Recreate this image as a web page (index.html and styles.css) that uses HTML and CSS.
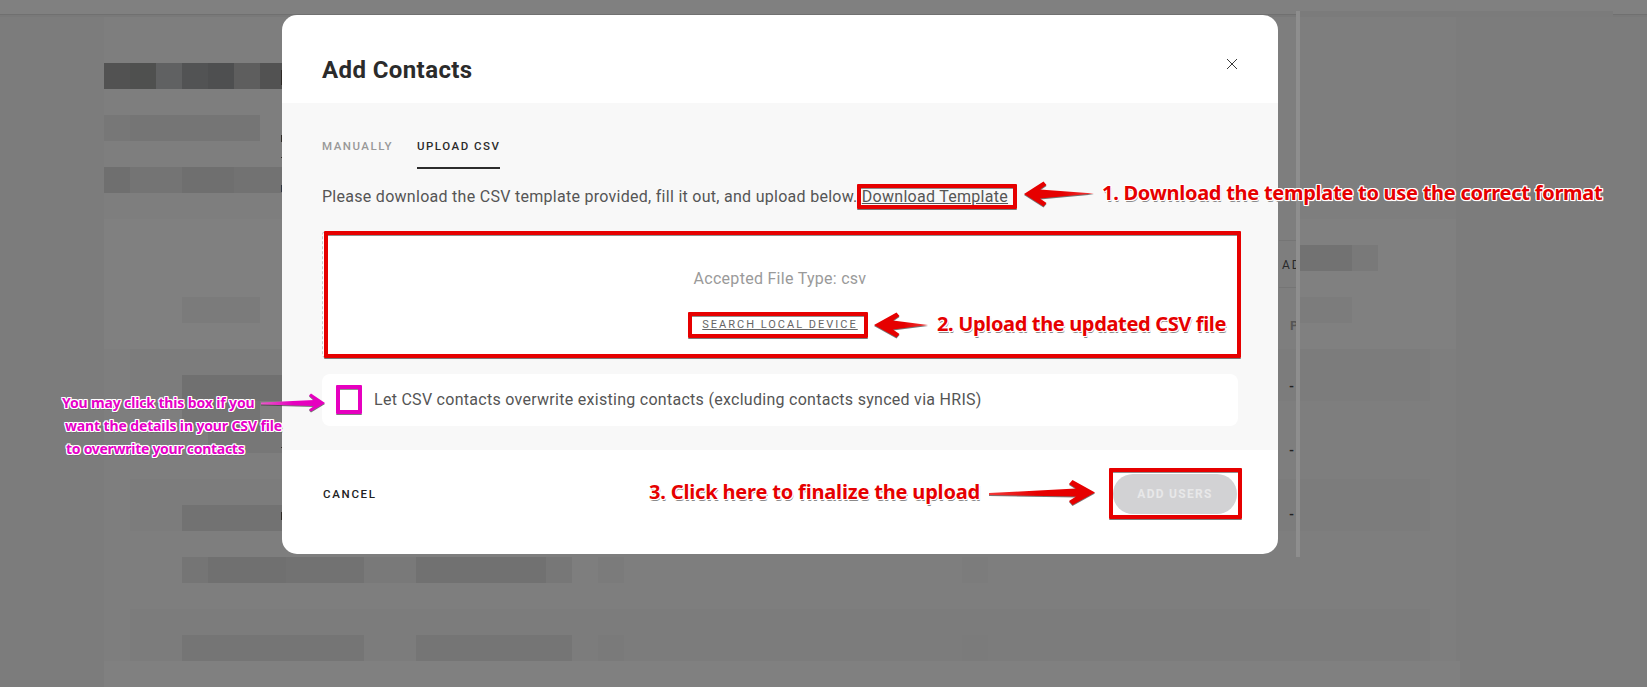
FILE: index.html
```html
<!DOCTYPE html>
<html lang="en">
<head>
<meta charset="utf-8">
<title>Add Contacts</title>
<link rel="stylesheet" href="styles.css">
</head>
<body>
<svg class="backdrop" width="1647" height="687" viewBox="0 0 1647 687" aria-hidden="true">
  <rect width="1647" height="687" fill="#7c7c7c"/>
  <rect x="104" y="15" width="1352" height="672" fill="#7e7e7e"/>
  <rect y="0" width="1647" height="14" fill="#808080"/>
  <rect y="14" width="1647" height="1" fill="#707070"/>
  <rect y="15" width="1647" height="2" fill="#797979"/>
  <rect x="1300" y="11" width="313" height="6" fill="#7b7b7b"/>
  <rect x="104" y="219" width="178" height="130" fill="#808080"/>
  <rect x="1300" y="219" width="156" height="130" fill="#808080"/>
  <rect x="130" y="349" width="1300" height="52" fill="#7c7c7c"/>
  <rect x="130" y="479" width="1300" height="52" fill="#7c7c7c"/>
  <rect x="130" y="609" width="1300" height="52" fill="#7c7c7c"/>
  <rect x="104" y="661" width="1356" height="26" fill="#808080"/>
  <rect x="104" y="63" width="26" height="26" fill="#525252"/>
  <rect x="130" y="63" width="26" height="26" fill="#4f504f"/>
  <rect x="156" y="63" width="26" height="26" fill="#606162"/>
  <rect x="182" y="63" width="26" height="26" fill="#525354"/>
  <rect x="208" y="63" width="26" height="26" fill="#4e4f50"/>
  <rect x="234" y="63" width="26" height="26" fill="#5e5e5e"/>
  <rect x="260" y="63" width="22" height="26" fill="#525252"/>
  <rect x="104" y="115" width="26" height="26" fill="#777777"/>
  <rect x="130" y="115" width="130" height="26" fill="#757575"/>
  <rect x="104" y="167" width="26" height="26" fill="#6f6f6f"/>
  <rect x="130" y="167" width="52" height="26" fill="#747474"/>
  <rect x="182" y="167" width="52" height="26" fill="#6f6f6f"/>
  <rect x="234" y="167" width="48" height="26" fill="#727272"/>
  <rect x="182" y="297" width="78" height="26" fill="#7b7b7b"/>
  <rect x="182" y="375" width="100" height="26" fill="#707070"/>
  <rect x="182" y="401" width="78" height="26" fill="#747474"/>
  <rect x="208" y="427" width="74" height="26" fill="#777777"/>
  <rect x="182" y="505" width="100" height="26" fill="#727272"/>
  <rect x="182" y="557" width="26" height="26" fill="#757575"/>
  <rect x="208" y="557" width="78" height="26" fill="#707070"/>
  <rect x="286" y="557" width="78" height="26" fill="#727272"/>
  <rect x="364" y="557" width="52" height="26" fill="#797979"/>
  <rect x="416" y="557" width="130" height="26" fill="#717171"/>
  <rect x="546" y="557" width="26" height="26" fill="#777777"/>
  <rect x="598" y="557" width="26" height="26" fill="#7b7b7b"/>
  <rect x="962" y="557" width="26" height="26" fill="#7c7c7c"/>
  <rect x="182" y="635" width="182" height="26" fill="#757575"/>
  <rect x="416" y="635" width="156" height="26" fill="#757575"/>
  <rect x="598" y="635" width="26" height="26" fill="#7a7a7a"/>
  <rect x="962" y="635" width="26" height="26" fill="#7b7b7b"/>
  <rect x="1300" y="245" width="52" height="26" fill="#727272"/>
  <rect x="1352" y="245" width="26" height="26" fill="#797979"/>
  <rect x="1300" y="297" width="52" height="26" fill="#7c7c7c"/>
  <rect x="1279" y="240" width="21" height="1" fill="#757575"/>
  <rect x="1279" y="287" width="21" height="1" fill="#757575"/>
  <rect x="281" y="70" width="1" height="15" fill="#2e2a26"/>
  <rect x="281" y="135" width="1" height="7" fill="#2e2a26"/>
  <rect x="281" y="157" width="1" height="1" fill="#2e2a26"/>
  <rect x="281" y="185" width="1" height="7" fill="#2e3440"/>
  <rect x="281" y="447" width="1" height="1" fill="#2e2a26"/>
  <rect x="281" y="512" width="1" height="8" fill="#2e2a26"/>
  <text class="peek peek-head" x="1282" y="269">AD</text>
  <text class="peek peek-p" x="1290" y="330">P</text>
  <text class="peek peek-dash" x="1289" y="391">-</text>
  <text class="peek peek-dash" x="1289" y="455">-</text>
  <text class="peek peek-dash" x="1289" y="519">-</text>
  <rect x="1296" y="11" width="4" height="546" fill="#8e8e8e"/>
</svg>

<section class="modal" aria-label="Add Contacts">
  <header class="modal-head">
    <h1 class="modal-title">Add Contacts</h1>
    <svg class="modal-close" width="12" height="12" viewBox="0 0 12 12" aria-label="Close">
      <path d="M1 1l10 10M11 1L1 11" fill="none" stroke="#3a3a3a" stroke-width="1"/>
    </svg>
  </header>
  <div class="modal-body">
    <nav class="tabs">
      <span class="tab">MANUALLY</span>
      <span class="tab tab-active">UPLOAD CSV</span>
    </nav>
    <p class="intro">Please download the CSV template provided, fill it out, and upload below. <a class="intro-link">Download Template</a></p>
    <div class="dropzone">
      <span class="drop-hint">Accepted File Type: csv</span>
      <a class="drop-link">SEARCH LOCAL DEVICE</a>
    </div>
    <label class="overwrite">
      <span class="checkbox"></span>
      <span class="overwrite-text">Let CSV contacts overwrite existing contacts (excluding contacts synced via HRIS)</span>
    </label>
  </div>
  <footer class="modal-foot">
    <span class="cancel">CANCEL</span>
    <span class="submit">ADD USERS</span>
  </footer>
</section>

<div class="notes">
  <span class="mark mark-template"></span>
  <span class="mark mark-drop"></span>
  <span class="mark mark-search"></span>
  <span class="mark mark-submit"></span>
  <span class="mark mark-check"></span>
  <svg class="arrows" width="1647" height="687" viewBox="0 0 1647 687" aria-hidden="true">
    <defs>
      <linearGradient id="redL" x1="1" x2="0" y1="0" y2="0"><stop offset="0" stop-color="#f23a3a"/><stop offset=".45" stop-color="#e60000"/></linearGradient>
      <linearGradient id="redR" x1="0" x2="1" y1="0" y2="0"><stop offset="0" stop-color="#f23a3a"/><stop offset=".45" stop-color="#e60000"/></linearGradient>
      <linearGradient id="pinkR" x1="0" x2="1" y1="0" y2="0"><stop offset="0" stop-color="#e85cc8"/><stop offset=".5" stop-color="#e600bf"/></linearGradient>
    </defs>
    <path fill="url(#redL)" d="M1094 193.500L1040 189.500L1046.500 185L1043.500 181.500L1024 194L1043.500 206.500L1046.500 203L1040 198.500Z"/>
    <path fill="url(#redL)" d="M928 325L893 320.500L899.500 316L896.500 312.500L874 325L896.500 337.500L899.500 334L893 329.500Z"/>
    <path fill="url(#redR)" d="M989 493L1076 488.500L1069 484L1072.500 480L1095 492.500L1072.500 505L1069 501L1076 496.500L989 495Z"/>
    <path fill="url(#pinkR)" d="M261 402.500L314 400L309 395.500L311 393.500L325 403L311 411.500L309 409.500L314 406L261 404.500Z"/>
  </svg>
  <span class="label label-one">1. Download the template to use the correct format</span>
  <span class="label label-two">2. Upload the updated CSV file</span>
  <span class="label label-three">3. Click here to finalize the upload</span>
  <span class="tip tip-a">You may click this box if you</span>
  <span class="tip tip-b">want the details in your CSV file</span>
  <span class="tip tip-c">to overwrite your contacts</span>
</div>
</body>
</html>
```

FILE: styles.css
```css
* { box-sizing: border-box; }

html, body {
  margin: 0;
  padding: 0;
  width: 1647px;
  height: 687px;
  overflow: hidden;
  background: #7c7c7c;
}

body {
  position: relative;
  font-family: Roboto, "Liberation Sans", sans-serif;
}

.backdrop {
  position: absolute;
  left: 0;
  top: 0;
  display: block;
}

.peek {
  font-family: Roboto, sans-serif;
  fill: #2a2a2a;
}
.peek-head { font-size: 12px; letter-spacing: 2px; }
.peek-p { font-size: 13px; fill: #555; font-weight: 700; }
.peek-dash { font-size: 13px; font-weight: 700; fill: #222; }

.modal {
  position: absolute;
  left: 282px;
  top: 15px;
  width: 996px;
  height: 539px;
  display: flex;
  flex-direction: column;
  background: #fff;
  border-radius: 15px;
  overflow: hidden;
}

.modal-head {
  height: 88px;
  flex: none;
  display: flex;
  justify-content: space-between;
  align-items: flex-start;
  padding: 30px 40px 0 40px;
}

.modal-title {
  margin: 0;
  font-size: 24px;
  line-height: 50px;
  font-weight: 700;
  color: #2b2b2b;
  letter-spacing: 0.400px;
}

.modal-close { margin-top: 13px; display: block; }

.modal-body {
  flex: 1;
  background: #f8f8f8;
  padding: 0 40px;
}

.tabs {
  display: flex;
  gap: 24px;
  padding-top: 34px;
}

.tab {
  font-size: 11.500px;
  line-height: 18px;
  height: 32px;
  font-weight: 500;
  letter-spacing: 1.500px;
  color: #999;
}

.tab-active {
  color: #2c2c2c;
  border-bottom: 2px solid #2c2c2c;
}

.intro {
  margin: 18px 0 0;
  font-size: 16px;
  line-height: 20px;
  letter-spacing: 0.280px;
  color: #555;
  white-space: nowrap;
}

.intro-link { text-decoration: underline; }

.dropzone {
  margin-top: 24px;
  height: 127px;
  background: #fff;
  border: 1px dashed #c8c8c8;
  border-radius: 4px;
  display: flex;
  flex-direction: column;
  align-items: center;
  padding-top: 37px;
}

.drop-hint {
  font-size: 16px;
  line-height: 20px;
  letter-spacing: 0.280px;
  color: #9a9a9a;
}

.drop-link {
  margin-top: 26px;
  font-size: 11px;
  line-height: 20px;
  font-weight: 400;
  letter-spacing: 2px;
  color: #666;
  text-decoration: underline;
}

.overwrite {
  margin-top: 16px;
  height: 52px;
  background: #fff;
  border-radius: 8px;
  display: flex;
  align-items: center;
  gap: 16px;
  padding-left: 18px;
}

.checkbox {
  flex: none;
  width: 18px;
  height: 18px;
  background: #fff;
}

.overwrite-text {
  font-size: 16px;
  line-height: 20px;
  letter-spacing: 0.280px;
  color: #555;
  white-space: nowrap;
}

.modal-foot {
  height: 104px;
  flex: none;
  display: flex;
  justify-content: space-between;
  align-items: center;
  padding: 0 41px 16px 41px;
}

.cancel {
  font-size: 11.500px;
  font-weight: 500;
  letter-spacing: 1.700px;
  color: #222;
}

.submit {
  width: 124px;
  height: 40px;
  border-radius: 20px;
  background: #d2d2d4;
  color: #e8e8e9;
  font-size: 12px;
  font-weight: 700;
  letter-spacing: 1.300px;
  display: flex;
  align-items: center;
  justify-content: center;
}

.notes {
  position: absolute;
  left: 0;
  top: 0;
  width: 1647px;
  height: 687px;
}

.arrows {
  position: absolute;
  left: 0;
  top: 0;
  display: block;
  filter: drop-shadow(0 1px 0 rgba(60, 60, 60, .7));
}

.mark {
  position: absolute;
  border: 4px solid #e60000;
  border-radius: 1px;
  box-shadow: 0 1px 0 rgba(70, 70, 70, .7), inset 0 1px 0 rgba(70, 70, 70, .6);
}

.mark-template { left: 857px; top: 184px; width: 160px; height: 25px; }
.mark-drop { left: 324px; top: 231px; width: 917px; height: 127px; }
.mark-search { left: 688px; top: 312px; width: 180px; height: 26px; }
.mark-submit { left: 1109px; top: 468px; width: 133px; height: 51px; }
.mark-check {
  left: 336px;
  top: 385px;
  width: 26px;
  height: 29px;
  border-color: #e600bf;
}

.label, .tip {
  position: absolute;
  white-space: nowrap;
  font-family: "Noto Sans", "Open Sans", sans-serif;
  font-weight: 700;
}

.label {
  font-size: 20px;
  line-height: 28px;
  color: #e60000;
  text-shadow:
    1px 0 0 #fff, -1px 0 0 #fff, 0 1px 0 #fff, 0 -1px 0 #fff,
    1px 1px 0 #fff, -1px 1px 0 #fff, 1px -1px 0 #fff, -1px -1px 0 #fff,
    1px 2px 0 #8a8a8a;
}

.label-one { left: 1102px; top: 179px; letter-spacing: -0.270px; }
.label-two { left: 937px; top: 310px; letter-spacing: -0.350px; }
.label-three { left: 649px; top: 478px; letter-spacing: -0.170px; }

.tip {
  font-size: 14px;
  line-height: 20px;
  color: #e600c8;
  text-shadow:
    1px 0 0 #fff, -1px 0 0 #fff, 0 1px 0 #fff, 0 -1px 0 #fff,
    1px 1px 0 #fff, -1px 1px 0 #fff, 1px -1px 0 #fff, -1px -1px 0 #fff,
    1px 2px 0 #6e6e6e;
}

.tip-a { left: 62px; top: 393px; letter-spacing: -0.140px; }
.tip-b { left: 65px; top: 416px; letter-spacing: -0.130px; }
.tip-c { left: 66px; top: 439px; letter-spacing: -0.280px; }
```
